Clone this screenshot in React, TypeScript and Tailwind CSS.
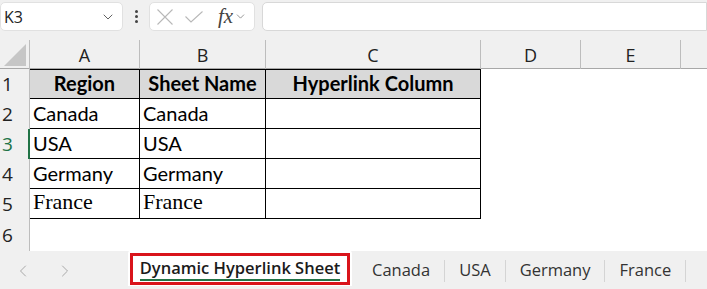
import { ChevronDown, ChevronLeft, ChevronRight } from 'lucide-react';

const COLS = ['A', 'B', 'C', 'D', 'E'];
const GRID = 'grid grid-cols-[30px_110px_126px_215px_100px_100px_1fr]';

type Row = { n: number; cells: string[]; serif?: boolean; head?: boolean };

const ROWS: Row[] = [
  { n: 1, cells: ['Region', 'Sheet Name', 'Hyperlink Column'], head: true },
  { n: 2, cells: ['Canada', 'Canada', ''] },
  { n: 3, cells: ['USA', 'USA', ''] },
  { n: 4, cells: ['Germany', 'Germany', ''] },
  { n: 5, cells: ['France', 'France', ''], serif: true },
];

const TABS = ['Canada', 'USA', 'Germany', 'France'];

function Toolbar() {
  return (
    <div className="flex h-[32px] items-center bg-[#f0f0f0] pt-[1px]">
      <div className="flex h-[29px] w-[123px] items-center justify-between rounded-[5px] border border-[#e1e1e1] bg-white pl-[3px] pr-[6px]">
        <span className="font-['Open_Sans',sans-serif] text-[16px] text-[#222]">K3</span>
        <ChevronDown size={16} strokeWidth={1.4} className="text-[#555]" />
      </div>
      <div className="flex w-[26px] flex-col items-center gap-[2px]">
        <span className="h-[3px] w-[3px] rounded-full bg-[#444]" />
        <span className="h-[3px] w-[3px] rounded-full bg-[#444]" />
        <span className="h-[3px] w-[3px] rounded-full bg-[#444]" />
      </div>
      <div className="flex h-[29px] w-[106px] items-center rounded-[5px] border border-[#e1e1e1] bg-white pl-[7px]">
        <svg width="16" height="16" viewBox="0 0 16 16" className="text-[#b8b8b8]">
          <path d="M0.5 0.5 L15.5 15.5 M15.5 0.5 L0.5 15.5" stroke="currentColor" strokeWidth="1.1" fill="none" />
        </svg>
        <svg width="18" height="12" viewBox="0 0 18 12" className="ml-[12px] text-[#b8b8b8]">
          <path d="M0.5 5.5 L6 11 L17.5 0.5" stroke="currentColor" strokeWidth="1.1" fill="none" />
        </svg>
        <span className="ml-[15px] font-['Liberation_Serif',serif] text-[21px] italic leading-none text-[#444]">fx</span>
        <ChevronDown size={13} strokeWidth={1.4} className="ml-[1px] text-[#777]" />
      </div>
      <div className="ml-[7px] h-[29px] flex-1 rounded-l-[5px] border border-[#d8d8d8] bg-white" />
    </div>
  );
}

function ColumnHeader() {
  return (
    <div className={`${GRID} h-[37px] border-b border-[#a8a8a8] bg-[#f0f0f0] pt-[8px]`}>
      <div className="relative border-r border-[#bdbdbd]">
        <div className="absolute bottom-[3px] right-[3px] h-0 w-0 border-b-[22px] border-l-[22px] border-b-[#c6c6c6] border-l-transparent" />
      </div>
      {COLS.map((c) => (
        <div
          key={c}
          className="flex items-center justify-center border-r border-[#bdbdbd] pt-[2px] font-['Open_Sans',sans-serif] text-[18px] text-[#222]"
        >
          {c}
        </div>
      ))}
      <div />
    </div>
  );
}

function SheetRow({ row }: { row: Row }) {
  const sel = row.n === 3;
  return (
    <div className={`${GRID} h-[30px]`}>
      <div
        className={`flex items-center border-r bg-[#f0f0f0] pl-[2px] font-['Open_Sans',sans-serif] text-[19px] ${
          sel ? 'border-r-[2px] border-[#217346] text-[#217346]' : 'border-[#bdbdbd] text-[#222]'
        }`}
      >
        {row.n}
      </div>
      {row.cells.map((v, i) => (
        <div
          key={i}
          className={`flex items-center border-b border-r border-black px-[3px] leading-none text-black ${
            row.head ? "justify-center border-t bg-[#d9d9d9] font-['Lato',sans-serif] text-[20px] font-bold" : ''
          } ${row.serif ? "pb-[3px] font-['Liberation_Serif',serif] text-[22px]" : "pb-[2px] font-['Lato',sans-serif] text-[20px]"}`}
        >
          {v}
        </div>
      ))}
      <div />
      <div />
      <div />
    </div>
  );
}

function TabBar() {
  return (
    <div className="flex h-[39px] items-start bg-[#f0f0f0]">
      <div className="flex h-[39px] w-[128px] items-center gap-[22px] pl-[13px] text-[#a8a8a8]">
        <ChevronLeft size={20} strokeWidth={1.2} />
        <ChevronRight size={20} strokeWidth={1.2} />
      </div>
      <div className="-mt-[1px] h-[36px] rounded-t-[4px] bg-white px-[2px] pt-[3px]">
        <div className="flex h-[32px] w-[220px] items-center justify-center border-[3px] border-[#d9141b]">
          <span className="border-b-[2px] border-[#217346] font-['Open_Sans',sans-serif] text-[16.5px] font-semibold leading-[22px] text-[#1b1b1b]">
            Dynamic Hyperlink Sheet
          </span>
        </div>
      </div>
      <div className="ml-[6px] flex h-[39px] items-center font-['Open_Sans',sans-serif] text-[16.5px] text-[#333]">
        {TABS.map((t) => (
          <div key={t} className="flex h-[22px] items-center border-r border-[#d4d4d4] px-[14px]">
            {t}
          </div>
        ))}
      </div>
    </div>
  );
}

export default function App() {
  return (
    <div className="h-[289px] w-[707px] overflow-hidden bg-white">
      <Toolbar />
      <ColumnHeader />
      {ROWS.map((r) => (
        <SheetRow key={r.n} row={r} />
      ))}
      <div className={`${GRID} h-[32px]`}>
        <div className="flex items-center border-r border-[#bdbdbd] bg-[#f0f0f0] pl-[2px] font-['Open_Sans',sans-serif] text-[19px] text-[#222]">
          6
        </div>
      </div>
      <TabBar />
    </div>
  );
}
